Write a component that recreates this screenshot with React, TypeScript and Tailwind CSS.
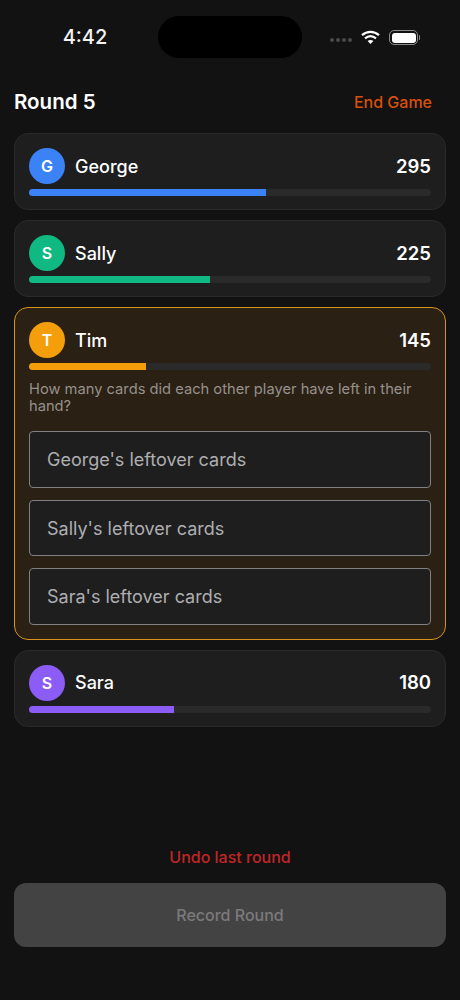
const players = [
  { name: 'George', initial: 'G', score: 295, color: 'bg-[#3b82f6]', width: '59%' },
  { name: 'Sally', initial: 'S', score: 225, color: 'bg-[#10b981]', width: '45%' },
  { name: 'Tim', initial: 'T', score: 145, color: 'bg-[#f59e0b]', width: '29%', active: true },
  { name: 'Sara', initial: 'S', score: 180, color: 'bg-[#8b5cf6]', width: '36%' },
];

function StatusBar() {
  return (
    <div className="flex h-[58px] items-start pt-4">
      <div className="w-[170px] pt-[8px] text-center text-[20px] leading-[26px] font-medium text-[#f2f2f2]">4:42</div>
      <div className="ml-[-12px] h-[42px] w-[144px] rounded-[21px] bg-black" />
      <div className="ml-[28px] flex items-center pt-[19px]">
        <div className="flex gap-[2px]">
          <span className="h-[4px] w-[4px] rounded-full bg-[#4a4a4a]" />
          <span className="h-[4px] w-[4px] rounded-full bg-[#4a4a4a]" />
          <span className="h-[4px] w-[4px] rounded-full bg-[#4a4a4a]" />
          <span className="h-[4px] w-[4px] rounded-full bg-[#4a4a4a]" />
        </div>
        <svg className="ml-[9px] mt-[-6px]" width="19" height="15" viewBox="0 0 19 15" fill="none" stroke="white" strokeWidth="2.2">
          <path d="M1 5.2C6 0.8 13 0.8 18 5.2" />
          <path d="M4 8.4C7.4 5.6 11.6 5.6 15 8.4" />
          <path d="M9.5 14L6.6 11C8.4 9.6 10.6 9.6 12.4 11Z" fill="white" stroke="none" />
        </svg>
        <div className="ml-[9px] mt-[-5px] flex items-center">
          <div className="h-[15px] w-[29px] rounded-[5px] border border-[#8a8a8a] p-[1.5px]">
            <div className="h-full w-full rounded-[3px] bg-white" />
          </div>
          <div className="ml-[1px] h-[5px] w-[1px] rounded-r bg-[#8a8a8a]" />
        </div>
      </div>
    </div>
  );
}

function PlayerCard({ player }: { player: (typeof players)[number] }) {
  return (
    <div className={`rounded-[14px] border px-[14px] pt-[14px] ${player.active ? 'border-[#d8941a] bg-[#2a2014] pb-[14px]' : 'border-[#2a2a2a] bg-[#1e1e1e] pb-[13px]'}`}>
      <div className="flex h-9 items-center">
        <div className={`flex h-9 w-9 items-center justify-center rounded-full text-[16px] font-semibold text-white ${player.color}`}>{player.initial}</div>
        <span className="ml-[10px] text-[18px] font-medium text-white">{player.name}</span>
        <span className="ml-auto pt-[1px] text-[18.5px] font-semibold text-white">{player.score}</span>
      </div>
      <div className="mt-[5px] h-[7px] overflow-hidden rounded-full bg-[#2a2a2a]">
        <div className={`h-full ${player.color}`} style={{ width: player.width }} />
      </div>
      {player.active && (
        <div>
          <p className="mt-[11px] text-[14.7px] leading-[16.5px] text-[#96918b]">How many cards did each other player have left in their hand?</p>
          <div className="mt-[17px] flex flex-col gap-[12px]">
            {players.filter(p => !p.active).map(p => (
              <div key={p.name} className="flex h-[56.5px] items-center rounded-[4px] border border-[#808084] bg-[#1e1e1e] px-[17px] pt-[1px] text-[18px] text-[#aeaeb2]">
                {p.name}'s leftover cards
              </div>
            ))}
          </div>
        </div>
      )}
    </div>
  );
}

export default function App() {
  return (
    <div className="flex h-[1000px] w-[460px] flex-col overflow-hidden bg-[#121212] font-['Inter',sans-serif]">
      <StatusBar />
      <div className="flex flex-1 flex-col px-[14px]">
        <div className="mt-[30px] flex h-[28px] items-center justify-between">
          <h1 className="text-[20.5px] font-semibold text-white">Round 5</h1>
          <button className="pr-[14px] text-[16px] font-medium text-[#d9500a]">End Game</button>
        </div>
        <div className="mt-[17px] flex flex-col gap-[10px]">
          {players.map(p => <PlayerCard key={p.name} player={p} />)}
        </div>
        <div className="mt-auto mb-[53px]">
          <div className="text-center text-[16px] font-medium text-[#c02626]">Undo last round</div>
          <div className="mt-[14px] flex h-[64px] items-center justify-center rounded-[12px] bg-[#444344] text-[16px] font-medium text-[#7b7a7b]">Record Round</div>
        </div>
      </div>
    </div>
  );
}
